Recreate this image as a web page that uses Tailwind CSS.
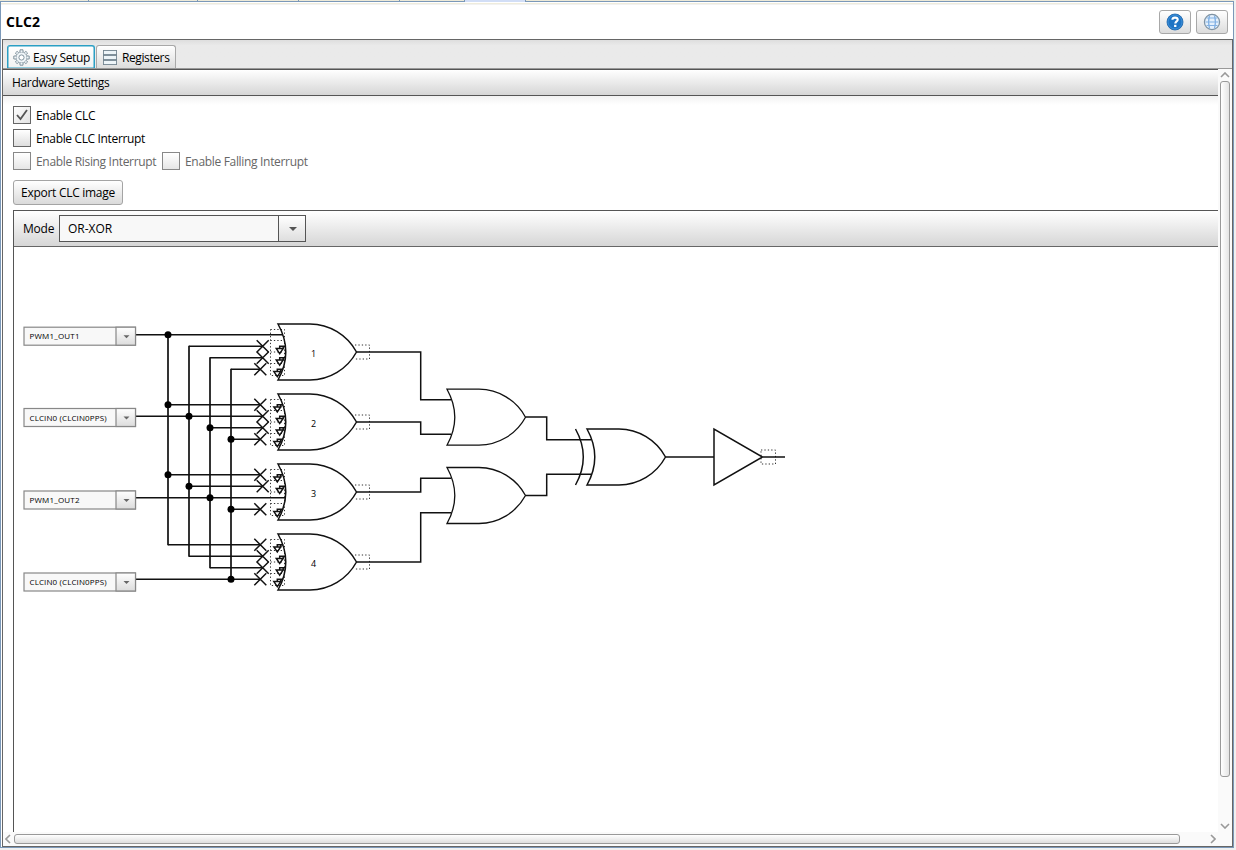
<!DOCTYPE html>
<html lang="en">
<head>
<meta charset="utf-8">
<title>CLC2</title>
<script src="https://cdn.jsdelivr.net/npm/@tailwindcss/browser@4"></script>
</head>
<body class="w-[1236px] h-[850px] overflow-hidden bg-[#f0f0f0] font-['Open_Sans',sans-serif] text-[12px] leading-4 text-black">
<div class="flex h-[850px] w-[1236px] flex-col">
  <div class="flex h-[2px] w-[1234px] border-b border-[#7b98b8] bg-[#ece9d8]">
    <div class="w-[89px] border-r border-[#7b98b8]"></div>
    <div class="w-[109px] border-r border-[#7b98b8]"></div>
    <div class="w-[101px] border-r border-[#7b98b8]"></div>
    <div class="w-[101px] border-r border-[#7b98b8]"></div>
    <div class="w-[65px] border-r border-[#7b98b8]"></div>
    <div class="h-[2px] w-[61px] border-r border-[#7b98b8] bg-[#d2def6]"></div>
  </div>
  <div class="flex h-[846px] w-[1234px] flex-col border border-t-0 border-[#7b98b8] bg-white">
    <div class="h-px shrink-0 bg-white"></div>
    <div class="h-[2px] shrink-0 border-b border-[#f2f2f2] bg-[#efecdc]"></div>
    <header class="flex h-[34px] shrink-0 items-center px-[5px]">
      <h1 class="grow text-[14px] font-bold tracking-[0.1px]">CLC2</h1>
      <div class="flex gap-[5px]">
        <button class="flex h-6 w-8 items-center justify-center rounded-[3px] border border-[#a8a8a8] bg-linear-to-b from-white to-[#dcdcdc]">
          <svg width="18" height="18" viewBox="0 0 18 18"><circle cx="9" cy="9" r="8" fill="#1f74c4" stroke="#1b62a8" stroke-width=".8"/><circle cx="9" cy="9" r="7" fill="none" stroke="#4a9be0" stroke-width=".7"/><path d="M6.400 6.800C6.500 5.200 7.600 4.600 9 4.600c1.600 0 2.700.8 2.700 2.100C11.700 8.400 9.300 8.500 9.300 10.500" fill="none" stroke="#fff" stroke-width="2.100"/><rect x="8.100" y="11.800" width="2.300" height="2.200" fill="#fff"/></svg>
        </button>
        <button class="flex h-6 w-8 items-center justify-center rounded-[3px] border border-[#a8a8a8] bg-linear-to-b from-white to-[#dcdcdc]">
          <svg width="18" height="18" viewBox="0 0 18 18" fill="none"><circle cx="9" cy="9" r="7.600" fill="#e4f0fc"/><path d="M2.500 9h13M3.500 5h11M3.500 12.500h11M6.500 2.500C5.500 6 5.500 12 6.500 15.500M11.500 2.500C12.500 6 12.500 12 11.500 15.500" stroke="#82b1e4" stroke-width="1.200"/><circle cx="9" cy="9" r="7.600" stroke="#7f93a3" stroke-width="1.200"/></svg>
        </button>
      </div>
    </header>
    <main class="ml-px flex min-h-0 grow flex-col border border-[#666]">
      <nav class="flex h-[29px] shrink-0 items-end gap-px border-b border-[#999] bg-linear-to-b from-[#dedede] via-[#eaeaea] via-20% to-[#eaeaea] pl-[4px]">
        <div class="flex h-[23px] w-[88px] items-center gap-[3px] rounded-t-[3px] border border-b-0 border-[#2b9fc4] bg-linear-to-b from-white to-[#f2f2f2] pl-[5px] pt-px whitespace-nowrap shadow-[inset_0_0_0_0.5px_#2b9fc4]">
          <svg class="shrink-0" width="17" height="17" viewBox="0 0 17 17" fill="none" stroke="#83949f"><circle cx="8.500" cy="8.500" r="5.600" fill="#f0f5f8"/><g stroke="#83949f"><path d="M7 3V.800H10V3M7 14v2.200h3V14M3 7H.800v3H3M14 7h2.200v3H14M3.600 5.500L2.400 4l1.700-1.600L5.600 3.500M13.400 5.500l1.200-1.500-1.700-1.600-1.500 1.100M3.600 11.500L2.400 13l1.700 1.600 1.500-1.100M13.400 11.500l1.200 1.500-1.700 1.600-1.500-1.100" fill="#f0f5f8"/></g><circle cx="8.500" cy="8.500" r="2.600" fill="#fff"/></svg>
          <span class="tracking-[-0.35px]">Easy Setup</span>
        </div>
        <div class="flex h-[23px] w-[80px] items-center gap-[5px] rounded-t-[3px] border border-b-0 border-[#a8a8a8] bg-linear-to-b from-white to-[#dcdcdc] pl-[6px] pt-px whitespace-nowrap">
          <svg class="shrink-0" width="14" height="15" viewBox="0 0 14 15" fill="#edf4f8"><path d="M0 0h14v15H0z"/><path d="M0 .5h14M0 4.500h14M0 5.500h14M0 9.500h14M0 10.500h14M0 14.500h14M.5 0v15M13.500 0v15" stroke="#73838f" stroke-width=".9"/></svg>
          <span class="tracking-[-0.4px]">Registers</span>
        </div>
      </nav>
      <div class="flex min-h-0 grow">
        <section class="flex w-[1215px] shrink-0 flex-col">
          <div class="flex h-[27px] shrink-0 items-center border-y border-[#555] bg-linear-to-b from-white to-[#d6d6d6] pl-[9px] pt-px"><span class="tracking-[-0.33px]">Hardware Settings</span></div>
          <div class="flex h-[114px] shrink-0 flex-col bg-linear-to-b from-[#f2f2f2] via-white via-8% to-white pl-[10px] pt-[10px]">
            <label class="flex h-[23px] items-start gap-[5px]"><span class="flex size-[18px] items-center justify-center border border-[#666] bg-linear-to-br from-white to-[#e2e2e2]"><svg width="14" height="14" viewBox="0 0 14 14" fill="none" stroke="#555" stroke-width="1.800"><path d="M2 7l3.500 4L12 2"/></svg></span><span class="mt-[2px] tracking-[-0.3px]">Enable CLC</span></label>
            <label class="flex h-[23px] items-start gap-[5px]"><span class="size-[18px] border border-[#666] bg-linear-to-b from-white to-[#dedede]"></span><span class="mt-[2px] tracking-[-0.35px]">Enable CLC Interrupt</span></label>
            <div class="flex h-[28px] items-start">
              <label class="flex w-[149px] gap-[5px] whitespace-nowrap text-[#666]"><span class="size-[18px] shrink-0 border border-[#888] bg-linear-to-b from-white to-[#e6e6e6]"></span><span class="mt-[2px] tracking-[-0.32px]">Enable Rising Interrupt</span></label>
              <label class="flex gap-[5px] whitespace-nowrap text-[#666]"><span class="size-[18px] shrink-0 border border-[#888] bg-linear-to-b from-white to-[#e6e6e6]"></span><span class="mt-[2px] tracking-[-0.32px]">Enable Falling Interrupt</span></label>
            </div>
            <button class="flex h-[25px] w-[110px] items-center justify-center rounded-[3px] border border-[#a4a4a4] bg-linear-to-b from-white to-[#dadada] pt-px whitespace-nowrap"><span class="tracking-[-0.28px]">Export CLC image</span></button>
          </div>
          <div class="ml-[10px] flex min-h-0 grow flex-col border-l border-t border-[#555]">
            <div class="flex h-[36px] shrink-0 items-center gap-[5px] border-b border-[#666] bg-linear-to-b from-white to-[#d6d6d6] pl-[9px]">
              <span class="w-[31px] tracking-[-0.2px] whitespace-nowrap">Mode</span>
              <div class="flex h-[27px] w-[247px] border border-[#555] bg-[#f8f8f8]">
                <div class="flex w-[219px] items-center border-r border-[#555] pl-[8px]"><span class="tracking-[0px]">OR-XOR</span></div>
                <div class="flex grow items-center justify-center bg-linear-to-b from-white to-[#dedede] pl-px"><svg width="8" height="4"><path d="M0 0h8L4 4z" fill="#555"/></svg></div>
              </div>
            </div>
            <svg class="block shrink-0" width="1204" height="585" viewBox="14 247 1204 585" fill="none" stroke="#111" stroke-width="1.500" font-family="Open Sans">
              <defs>
                <linearGradient id="btn" x2="0" y2="1"><stop stop-color="#fff"/><stop offset="1" stop-color="#dcdcdc"/></linearGradient>
                <path id="or" d="M0-28H32A53.400 53.400 0 0 1 78.500 0A53.400 53.400 0 0 1 32 28H0Q15.600 0 0-28Z"/>
                <path id="x" d="M-6-6L6 6M-6 6L6-6"/>
                <path id="inv" d="M6 0H0V2.300M-3.400 2.300H3.400L0 7.300Z M3.500 0V3" stroke-width="1.500"/>
                <g id="sel">
                  <rect x="24" y="-9" width="111.500" height="18" fill="#f8f8f8" stroke="#888" stroke-width="1.200"/>
                  <rect x="116" y="-9" width="19.500" height="18" fill="url(#btn)" stroke="#888" stroke-width="1.200"/>
                  <path d="M123.500-1h6l-3 3z" fill="#666" stroke="none"/>
                </g>
              </defs>
              <g stroke="#333" stroke-width="1" stroke-dasharray="1.300 2.100">
                <path d="M270.500 329.500h14v46h-14zM270.500 340.500h14M270.500 352h14M270.500 363.500h14M355 345h14.500v14h-14.500"/>
                <path d="M270.500 399.500h14v46h-14zM270.500 410.500h14M270.500 422h14M270.500 433.500h14M355 415h14.500v14h-14.500"/>
                <path d="M270.500 469.500h14v46h-14zM270.500 480.500h14M270.500 492h14M270.500 503.500h14M355 485h14.500v14h-14.500"/>
                <path d="M270.500 539.500h14v46h-14zM270.500 550.500h14M270.500 562h14M270.500 573.500h14M355 555h14.500v14h-14.500"/>
                <path d="M761 450h14.500v14h-14.500z"/>
              </g>
              <path d="M136 334.700H283M189 346.300H263M210 357.800H263M231 369.300H260M168 404.700H260M136 416.200H263M210 427.800H263M231 439.300H260M168 474.700H260M189 486.200H263M136 497.800H285M231 509.300H260M168 544.700H260M189 556.200H263M210 567.800H263M136 579.300H260" stroke-width="1.400"/>
              <path d="M168 334.700V545.200M189 345.800V556.700M210 357.300V568.300M231 368.800V579.300" stroke-width="1.700"/>
              <g fill="#000" stroke="none">
                <circle cx="168" cy="334.700" r="3.500"/><circle cx="168" cy="404.700" r="3.500"/><circle cx="168" cy="474.700" r="3.500"/>
                <circle cx="189" cy="416.200" r="3.500"/><circle cx="189" cy="486.200" r="3.500"/>
                <circle cx="210" cy="427.800" r="3.500"/><circle cx="210" cy="497.800" r="3.500"/>
                <circle cx="231" cy="439.300" r="3.500"/><circle cx="231" cy="509.300" r="3.500"/><circle cx="231" cy="579.300" r="3.500"/>
              </g>
              <use href="#x" x="262.700" y="346.300"/><use href="#x" x="262.700" y="357.800"/><use href="#x" x="260.300" y="369.300"/>
              <use href="#x" x="260.300" y="404.700"/><use href="#x" x="262.700" y="416.200"/><use href="#x" x="262.700" y="427.800"/><use href="#x" x="260.300" y="439.300"/>
              <use href="#x" x="260.300" y="474.700"/><use href="#x" x="262.700" y="486.200"/><use href="#x" x="260.300" y="509.300"/>
              <use href="#x" x="260.300" y="544.700"/><use href="#x" x="262.700" y="556.200"/><use href="#x" x="262.700" y="567.800"/><use href="#x" x="260.300" y="579.300"/>
              <use href="#inv" x="279.700" y="346.300"/><use href="#inv" x="279.700" y="357.800"/><use href="#inv" x="277.300" y="369.300"/>
              <use href="#inv" x="277.300" y="404.700"/><use href="#inv" x="279.700" y="416.200"/><use href="#inv" x="279.700" y="427.800"/><use href="#inv" x="277.300" y="439.300"/>
              <use href="#inv" x="277.300" y="474.700"/><use href="#inv" x="279.700" y="486.200"/><use href="#inv" x="277.300" y="509.300"/>
              <use href="#inv" x="277.300" y="544.700"/><use href="#inv" x="279.700" y="556.200"/><use href="#inv" x="279.700" y="567.800"/><use href="#inv" x="277.300" y="579.300"/>
              <use href="#or" x="278" y="352"/><use href="#or" x="278" y="422"/><use href="#or" x="278" y="492"/><use href="#or" x="278" y="562"/>
              <use href="#or" x="447" y="417.200" stroke-width="1.300"/><use href="#or" x="447" y="495.500" stroke-width="1.300"/><use href="#or" x="587" y="457"/>
              <path d="M575.500 429Q591.100 457 575.500 485"/>
              <path d="M356.500 352H420.700V399.700H451M356.500 422H420.700V434.300H451M356.500 492H420.700V478.200H451M356.500 562H420.700V512.800H451M525.500 417H546.700V439.700H591M525.500 495.500H546.700V474.200H591M665.500 457H714M762.500 457H785M714 429V485L762.500 457Z"/>
              <use href="#sel" y="336.200"/><use href="#sel" y="417.500"/><use href="#sel" y="500"/><use href="#sel" y="582"/>
              <g fill="#000" stroke="none" font-size="8">
                <text x="29.500" y="339" textLength="50">PWM1_OUT1</text>
                <text x="29.500" y="421" textLength="77">CLCIN0 (CLCIN0PPS)</text>
                <text x="29.500" y="503" textLength="50">PWM1_OUT2</text>
                <text x="29.500" y="585" textLength="77">CLCIN0 (CLCIN0PPS)</text>
                <g font-size="9"><text x="311" y="356.500">1</text><text x="311" y="426.500">2</text><text x="311" y="496.500">3</text><text x="311" y="566.500">4</text></g>
              </g>
            </svg>
          </div>
        </section>
        <aside class="flex w-[13px] shrink-0 flex-col items-center bg-[#fafafa] py-[3px]">
          <svg class="shrink-0" width="10" height="6" fill="none" stroke="#999" stroke-width="1.600"><path d="M1 5l4-4 4 4"/></svg>
          <div class="mt-[3px] h-[696px] w-[10px] rounded-[3px] border border-[#999] bg-linear-to-r from-white to-[#e4e4e4]"></div>
          <svg class="mt-auto shrink-0" width="10" height="6" fill="none" stroke="#999" stroke-width="1.600"><path d="M1 1l4 4 4-4"/></svg>
        </aside>
        <div class="grow bg-[#fafafa]"></div>
      </div>
      <footer class="flex h-[14px] shrink-0 items-center bg-[#fafafa] pl-[2px]">
        <svg width="6" height="10" fill="none" stroke="#999" stroke-width="1.600"><path d="M5 1L1 5l4 4"/></svg>
        <div class="ml-[3px] h-[10px] w-[1166px] rounded-[3px] border border-[#999] bg-linear-to-b from-white to-[#dedede]"></div>
        <svg class="ml-[30px]" width="6" height="10" fill="none" stroke="#999" stroke-width="1.600"><path d="M1 1l4 4-4 4"/></svg>
      </footer>
    </main>
  </div>
</div>
</body>
</html>
